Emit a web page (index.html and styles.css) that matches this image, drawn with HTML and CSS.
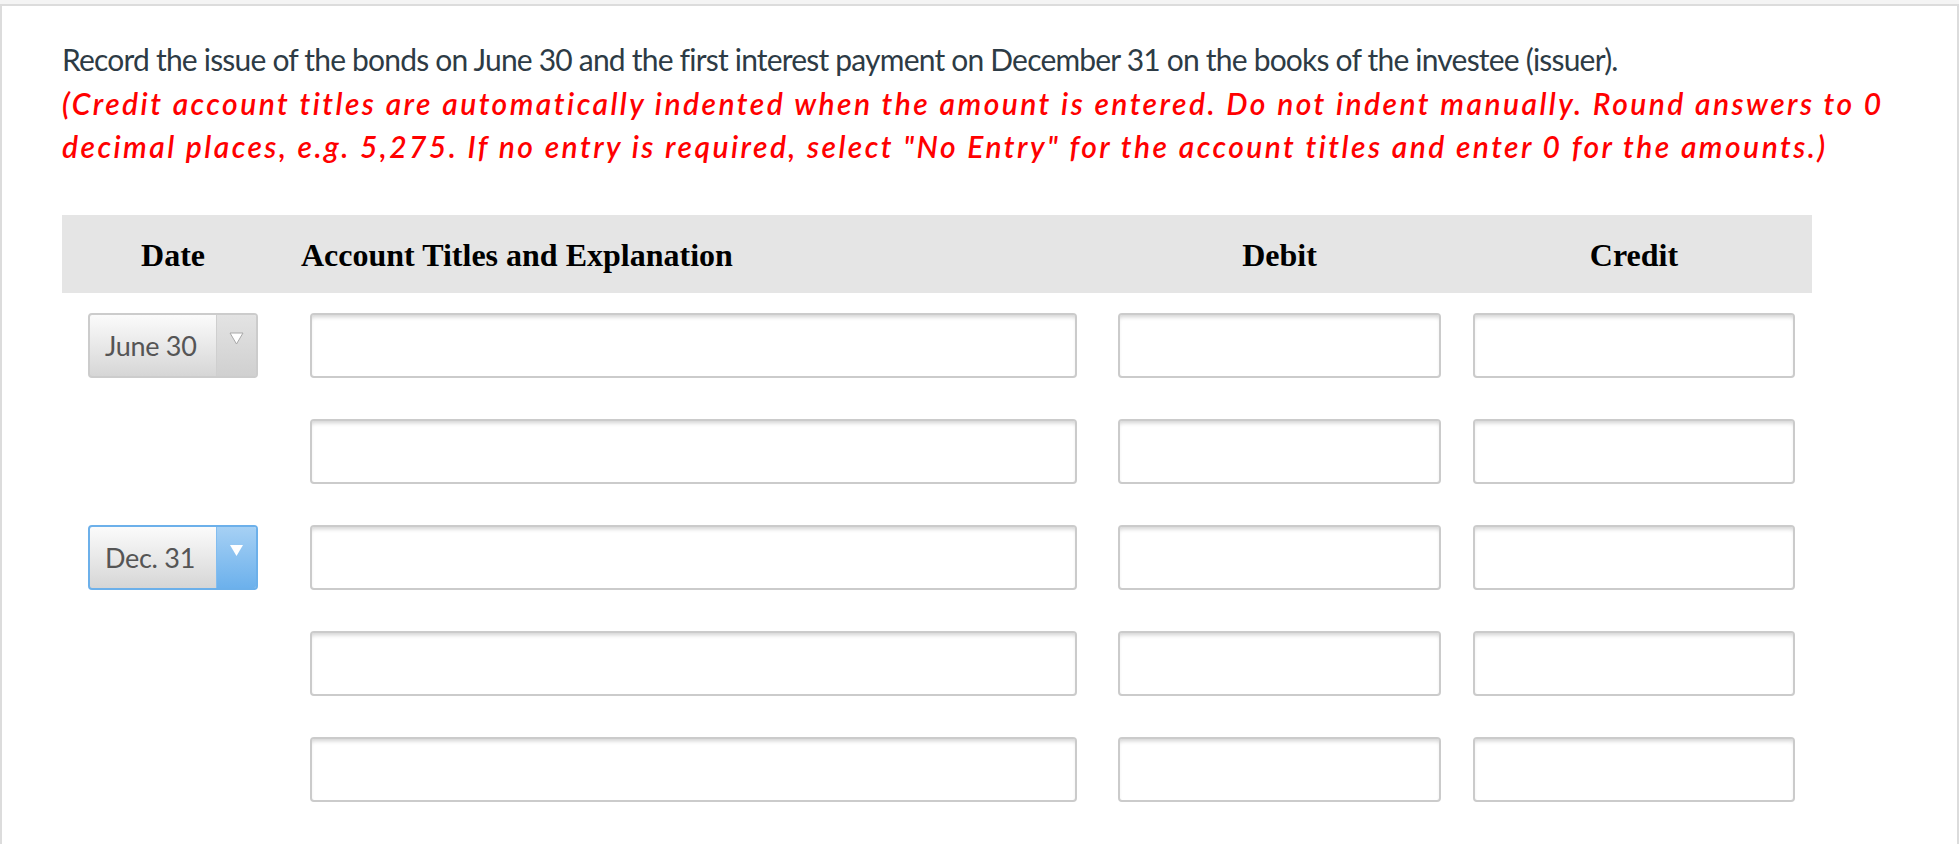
FILE: index.html
```html
<!DOCTYPE html>
<html>
<head>
<meta charset="utf-8">
<link rel="stylesheet" href="styles.css">
</head>
<body>
<div class="panel">
  <div class="question">
    <p class="prompt">Record the issue of the bonds on June 30 and the first interest payment on December 31 on the books of the investee (issuer).</p>
    <p class="note">(Credit account titles are automatically indented when the amount is entered. Do not indent manually. Round answers to 0 decimal places, e.g. 5,275. If no entry is required, select "No Entry" for the account titles and enter 0 for the amounts.)</p>
  </div>
  <div class="journal">
    <div class="jhead">
      <div class="hcell c-date">Date</div>
      <div class="hcell c-acct">Account Titles and Explanation</div>
      <div class="hcell c-debit">Debit</div>
      <div class="hcell c-credit">Credit</div>
    </div>
    <div class="jrow">
      <div class="select">
        <span class="sel-text">June 30</span>
        <span class="sel-btn"><svg width="15" height="13" viewBox="0 0 15 13"><polygon points="1,1 14,1 7.5,12" fill="#fff" stroke="#a8a8a8" stroke-width="1"/></svg></span>
      </div>
      <div class="field f-acct"></div>
      <div class="field f-debit"></div>
      <div class="field f-credit"></div>
    </div>
    <div class="jrow">
      <div class="field f-acct"></div>
      <div class="field f-debit"></div>
      <div class="field f-credit"></div>
    </div>
    <div class="jrow">
      <div class="select active">
        <span class="sel-text">Dec. 31</span>
        <span class="sel-btn"><svg width="15" height="13" viewBox="0 0 15 13"><polygon points="1,1 14,1 7.5,12" fill="#fff"/></svg></span>
      </div>
      <div class="field f-acct"></div>
      <div class="field f-debit"></div>
      <div class="field f-credit"></div>
    </div>
    <div class="jrow">
      <div class="field f-acct"></div>
      <div class="field f-debit"></div>
      <div class="field f-credit"></div>
    </div>
    <div class="jrow">
      <div class="field f-acct"></div>
      <div class="field f-debit"></div>
      <div class="field f-credit"></div>
    </div>
  </div>
</div>
</body>
</html>
```

FILE: styles.css
```css
html, body {
  margin: 0;
  padding: 0;
}
body {
  background: #f4f4f4;
  width: 1959px;
  height: 844px;
  overflow: hidden;
}
.panel {
  margin-top: 4px;
  background: #fff;
  border: 2px solid #dcdcdc;
  border-bottom: none;
  height: 900px;
  padding-left: 60px;
  box-sizing: border-box;
}
.question {
  padding-top: 32px;
  font-family: Lato, "Liberation Sans", sans-serif;
}
.prompt {
  margin: 0;
  font-size: 30px;
  letter-spacing: -0.8px;
  line-height: 43.5px;
  color: #2d3b45;
}
.note {
  margin: 0;
  font-size: 30px;
  line-height: 43.5px;
  letter-spacing: 2.45px;
  color: #ff0000;
  font-style: italic;
  font-weight: 600;
  width: 1850px;
}
.journal {
  margin-top: 46px;
  width: 1750px;
}
.jhead, .jrow {
  display: grid;
  grid-template-columns: 26px 170px 52px 767px 41px 323px 32px 322px;
}
.jhead {
  height: 78px;
  box-sizing: border-box;
  padding-top: 4px;
  background: #e5e5e5;
  align-items: center;
  font-family: "Liberation Serif", serif;
  font-weight: 700;
  font-size: 32px;
  color: #000;
}
.hcell { text-align: center; white-space: nowrap; }
.c-date { grid-column: 2; }
.c-acct { grid-column: 4; text-align: left; margin-left: -9px; }
.c-debit { grid-column: 6; }
.c-credit { grid-column: 8; }
.jrow {
  height: 65px;
  margin-top: 41px;
}
.jhead + .jrow { margin-top: 20px; }
.select { grid-column: 2; }
.f-acct { grid-column: 4; }
.f-debit { grid-column: 6; }
.f-credit { grid-column: 8; }
.field {
  box-sizing: border-box;
  height: 65px;
  border: 2px solid #cbcbcb;
  border-radius: 4px;
  background: #fff;
  box-shadow: inset 0 4px 4px -2px rgba(0,0,0,0.18);
}
.select {
  box-sizing: border-box;
  height: 65px;
  display: flex;
  border: 2px solid #cccccc;
  border-radius: 4px;
  background: linear-gradient(#fbfbfb, #d6d6d6);
  overflow: hidden;
  font-family: Lato, "Liberation Sans", sans-serif;
}
.sel-text {
  flex: 1;
  display: flex;
  align-items: center;
  padding-left: 15px;
  font-size: 27px;
  letter-spacing: -0.3px;
  color: #555;
}
.sel-btn {
  width: 40px;
  border-left: 1px solid #cfcfcf;
  background: linear-gradient(#e3e3e3, #d0d0d0);
  display: flex;
  justify-content: center;
  padding-top: 17px;
  box-sizing: border-box;
}
.select.active {
  border-color: #6cb0ea;
}
.select.active .sel-btn {
  border-left-color: #82bdf0;
  background: linear-gradient(#a6d0f4, #6cb1ec);
}
```
